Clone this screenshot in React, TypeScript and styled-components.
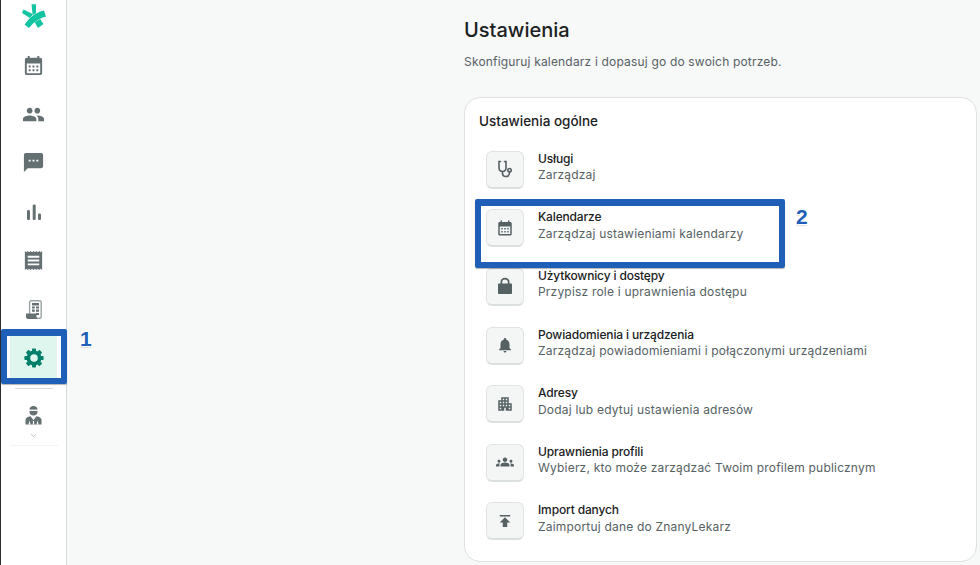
import React from 'react';
import styled, { createGlobalStyle } from 'styled-components';
import { ChevronDown } from 'lucide-react';
import {
  MdApartment,
  MdCalendarMonth,
  MdGroups,
  MdNotifications,
  MdPeople,
  MdPublish,
  MdReceipt,
  MdSms
} from 'react-icons/md';

const GlobalStyle = createGlobalStyle`
  html, body {
    margin: 0;
    padding: 0;
    height: 100%;
    overflow: hidden;
    background: #f7f8f8;
    font-family: Inter, "Liberation Sans", sans-serif;
  }
`;

const Page = styled.div`
  position: relative;
  display: flex;
  width: 980px;
  height: 565px;
  overflow: hidden;
`;

const Sidebar = styled.nav`
  flex: none;
  display: flex;
  flex-direction: column;
  align-items: center;
  width: 65px;
  height: 100%;
  background: #fff;
  border-left: 1px solid #2b2e30;
  border-right: 1px solid #d5d9d9;
`;

const Logo = styled.div`
  display: flex;
  justify-content: center;
  box-sizing: border-box;
  width: 100%;
  height: 41px;
  padding-top: 4px;
`;

const NavItem = styled.div<{ $active?: boolean }>`
  flex: none;
  display: flex;
  align-items: center;
  justify-content: center;
  width: ${(p) => (p.$active ? '47px' : '100%')};
  height: 48.8px;
  font-size: 23px;
  color: ${(p) => (p.$active ? '#00806a' : '#647072')};
  background: ${(p) => (p.$active ? '#dff6ef' : 'transparent')};
`;

const NavDivider = styled.div`
  flex: none;
  width: 38px;
  height: 1px;
  margin: 5px 0 17px;
  background: #d5d9d9;
`;

const Avatar = styled.div`
  display: flex;
  flex-direction: column;
  align-items: center;
  gap: 6px;
  width: 48px;
  padding-bottom: 5px;
  border-bottom: 1px solid #f2f4f4;
  color: #647072;
`;

const Main = styled.main`
  flex: 1;
  display: flex;
  flex-direction: column;
  padding: 16px 3px 0 397px;
`;

const Title = styled.h1`
  margin: 0;
  font-size: 20px;
  line-height: 28px;
  font-weight: 500;
  color: #1b2122;
`;

const Subtitle = styled.p`
  margin: 8px 0 0;
  font-size: 12px;
  line-height: 20px;
  color: #566164;
  letter-spacing: 0.18px;
`;

const Card = styled.section`
  box-sizing: border-box;
  width: 513px;
  height: 465px;
  margin-top: 25px;
  padding: 13px 14px 0;
  background: #fff;
  border: 1px solid #dfe2e2;
  border-radius: 16px;
`;

const CardTitle = styled.h2`
  margin: 0 0 19.8px;
  font-size: 13.5px;
  line-height: 20px;
  font-weight: 500;
  color: #1b2122;
`;

const Row = styled.div`
  display: flex;
  align-items: flex-start;
  gap: 14px;
  height: 58.6px;
  padding-left: 7px;
`;

const IconBox = styled.div`
  flex: none;
  box-sizing: border-box;
  display: flex;
  align-items: center;
  justify-content: center;
  width: 38px;
  height: 38px;
  background: #f4f5f5;
  border: 1px solid #e1e4e4;
  border-bottom: 2px solid #dcdfdf;
  border-radius: 6px;
  color: #566164;
  font-size: 18px;
`;

const RowText = styled.div`
  display: flex;
  flex-direction: column;
`;

const RowTitle = styled.div`
  font-size: 12px;
  line-height: 16px;
  font-weight: 500;
  color: #1b2122;
  letter-spacing: -0.15px;
`;

const RowSub = styled.div`
  margin-top: 0.4px;
  font-size: 12px;
  line-height: 16px;
  color: #566164;
  letter-spacing: 0.2px;
`;

const Highlight = styled.div<{ $x: number; $y: number; $w: number; $h: number }>`
  position: absolute;
  box-sizing: border-box;
  left: ${(p) => p.$x}px;
  top: ${(p) => p.$y}px;
  width: ${(p) => p.$w}px;
  height: ${(p) => p.$h}px;
  border-style: solid;
  border-color: #1f5fb8;
  border-width: 7px 6px 6px;
  border-radius: 2px;
  box-shadow: 0 1px 1px rgba(0, 0, 0, 0.3);
`;

const Callout = styled.div<{ $x: number; $y: number }>`
  position: absolute;
  left: ${(p) => p.$x}px;
  top: ${(p) => p.$y}px;
  font-family: "Liberation Sans", sans-serif;
  font-size: 21px;
  line-height: 22px;
  font-weight: 700;
  color: #1f5fb8;
  text-shadow: 1px 1px 0 #fff, -1px -1px 0 #fff, 0 2px 1px #dfe2e2;
`;

const LogoMark = () => (
  <svg width="24" height="24" viewBox="0 0 24 24" fill="#13c4a3">
    <path d="M9.5 0.3 L14 0.3 L14 9.5 L10.7 11.5 Z" />
    <path d="M0 8.9 L1.4 5.6 L10.7 10 L8.7 14.5 Z" />
    <path d="M12.5 18 L17.5 14 L21.5 20 L16 24 Z" />
    <path d="M22 6.4 L24 12.7 C17.5 14 11.5 18 7 24 L2.6 20.8 C7 13.5 14 8 22 6.4 Z" stroke="#fff" strokeWidth="0.9" paintOrder="stroke" />
  </svg>
);

const Gear = () => (
  <svg width="20" height="20" viewBox="0 0 20 20" fill="currentColor">
    <circle cx="10" cy="10" r="5.6" fill="none" stroke="currentColor" strokeWidth="3.6" />
    {[0, 45, 90, 135, 180, 225, 270, 315].map((deg) => (
      <rect key={deg} x="8" y="0.4" width="4" height="4" rx="0.8" transform={`rotate(${deg} 10 10)`} />
    ))}
  </svg>
);

const Bars = () => (
  <svg width="18" height="16" viewBox="0 0 18 16" fill="currentColor">
    <rect x="2" y="6" width="3" height="10" rx="1.2" />
    <rect x="7.7" y="0.5" width="3" height="15.5" rx="1.2" />
    <rect x="13" y="9.5" width="3" height="6.5" rx="1.2" />
  </svg>
);

const Ledger = () => (
  <svg width="16" height="19" viewBox="0 0 16 19" fill="currentColor">
    <rect x="3.6" y="0.7" width="11.6" height="17.6" rx="1.5" fill="#fff" stroke="#9aa3a5" strokeWidth="1.4" />
    <path d="M0 13.5 H10.5 V16.5 C10.5 17.8 11 18.6 12 19 H2 C0.7 19 0 18 0 16.5 Z" />
    <path d="M6 3 H13 V5.4 H6 Z M6 6.4 H8.8 V8.6 H6 Z M10 6.4 H13 V8.6 H10 Z M6 9.6 H8.8 V11.8 H6 Z M10 9.6 H13 V11.8 H10 Z M10 13 H13 V15 H10 Z" />
  </svg>
);

const Doctor = () => (
  <svg width="17" height="19" viewBox="0 0 17 19" fill="currentColor">
    <path d="M4.5 3.5 C4.5 1.3 6.2 0 8.5 0 C10.8 0 12.5 1.3 12.5 3.5 L12.5 6 C12.5 8.3 10.8 9.5 8.5 9.5 C6.2 9.5 4.5 8.3 4.5 6 Z" />
    <path d="M0.5 18.5 L0.5 14 C0.5 12 2.5 10.8 5.5 10.2 L8.5 14 L11.5 10.2 C14.5 10.8 16.5 12 16.5 14 L16.5 18.5 Z" />
    <rect x="4" y="3.6" width="9" height="1.3" fill="#fff" />
    <rect x="7.9" y="15" width="1.2" height="3.5" fill="#fff" />
    <path d="M3.5 18.5 L4.5 14.5 L5.5 18.5 Z M11.5 18.5 L12.5 14.5 L13.5 18.5 Z" fill="#fff" />
  </svg>
);

const ScopeIcon = () => (
  <svg width="20" height="20" viewBox="0 0 20 20" fill="none" stroke="currentColor" strokeWidth="1.6" strokeLinecap="round">
    <path d="M5.5 2.5 H4 V8.5 C4 11 5.5 12.5 7.5 12.5 C9.5 12.5 11 11 11 8.5 V2.5 H9.5" />
    <path d="M7.5 12.5 V14.5 C7.5 16.5 9 17.5 10.8 17.5 C12.8 17.5 14.5 16.5 14.5 13.5" />
    <circle cx="14.5" cy="11.2" r="1.7" />
  </svg>
);

const Padlock = () => (
  <svg width="16" height="18" viewBox="0 0 16 18" fill="currentColor">
    <path d="M3.5 6.5 V5 C3.5 2.4 5.4 0.8 8 0.8 C10.6 0.8 12.5 2.4 12.5 5 V6.5 H14 C14.6 6.5 15 6.9 15 7.5 V16 C15 16.6 14.6 17 14 17 H2 C1.4 17 1 16.6 1 16 V7.5 C1 6.9 1.4 6.5 2 6.5 Z M5.2 6.5 H10.8 V5 C10.8 3.4 9.6 2.5 8 2.5 C6.4 2.5 5.2 3.4 5.2 5 Z" fillRule="evenodd" />
  </svg>
);

const navIcons = [
  <MdCalendarMonth />,
  <MdPeople />,
  <MdSms />,
  <Bars />,
  <MdReceipt />,
  <Ledger />
];

const rows = [
  { icon: <ScopeIcon />, title: 'Usługi', sub: 'Zarządzaj' },
  { icon: <MdCalendarMonth />, title: 'Kalendarze', sub: 'Zarządzaj ustawieniami kalendarzy' },
  { icon: <Padlock />, title: 'Użytkownicy i dostępy', sub: 'Przypisz role i uprawnienia dostępu' },
  { icon: <MdNotifications />, title: 'Powiadomienia i urządzenia', sub: 'Zarządzaj powiadomieniami i połączonymi urządzeniami' },
  { icon: <MdApartment />, title: 'Adresy', sub: 'Dodaj lub edytuj ustawienia adresów' },
  { icon: <MdGroups />, title: 'Uprawnienia profili', sub: 'Wybierz, kto może zarządzać Twoim profilem publicznym' },
  { icon: <MdPublish />, title: 'Import danych', sub: 'Zaimportuj dane do ZnanyLekarz' }
];

const App: React.FC = () => (
  <Page>
    <GlobalStyle />
    <Sidebar>
      <Logo>
        <LogoMark />
      </Logo>
      {navIcons.map((icon, i) => (
        <NavItem key={i}>{icon}</NavItem>
      ))}
      <NavItem $active>
        <Gear />
      </NavItem>
      <NavDivider />
      <Avatar>
        <Doctor />
        <ChevronDown size={9} strokeWidth={1.5} color="#8a9496" />
      </Avatar>
    </Sidebar>
    <Main>
      <Title>Ustawienia</Title>
      <Subtitle>Skonfiguruj kalendarz i dopasuj go do swoich potrzeb.</Subtitle>
      <Card>
        <CardTitle>Ustawienia ogólne</CardTitle>
        {rows.map((r) => (
          <Row key={r.title}>
            <IconBox>{r.icon}</IconBox>
            <RowText>
              <RowTitle>{r.title}</RowTitle>
              <RowSub>{r.sub}</RowSub>
            </RowText>
          </Row>
        ))}
      </Card>
    </Main>
    <Highlight $x={1} $y={329} $w={66} $h={55} />
    <Highlight $x={475} $y={199} $w={310} $h={69} />
    <Callout $x={80} $y={328}>1</Callout>
    <Callout $x={796} $y={206}>2</Callout>
  </Page>
);

export default App;
